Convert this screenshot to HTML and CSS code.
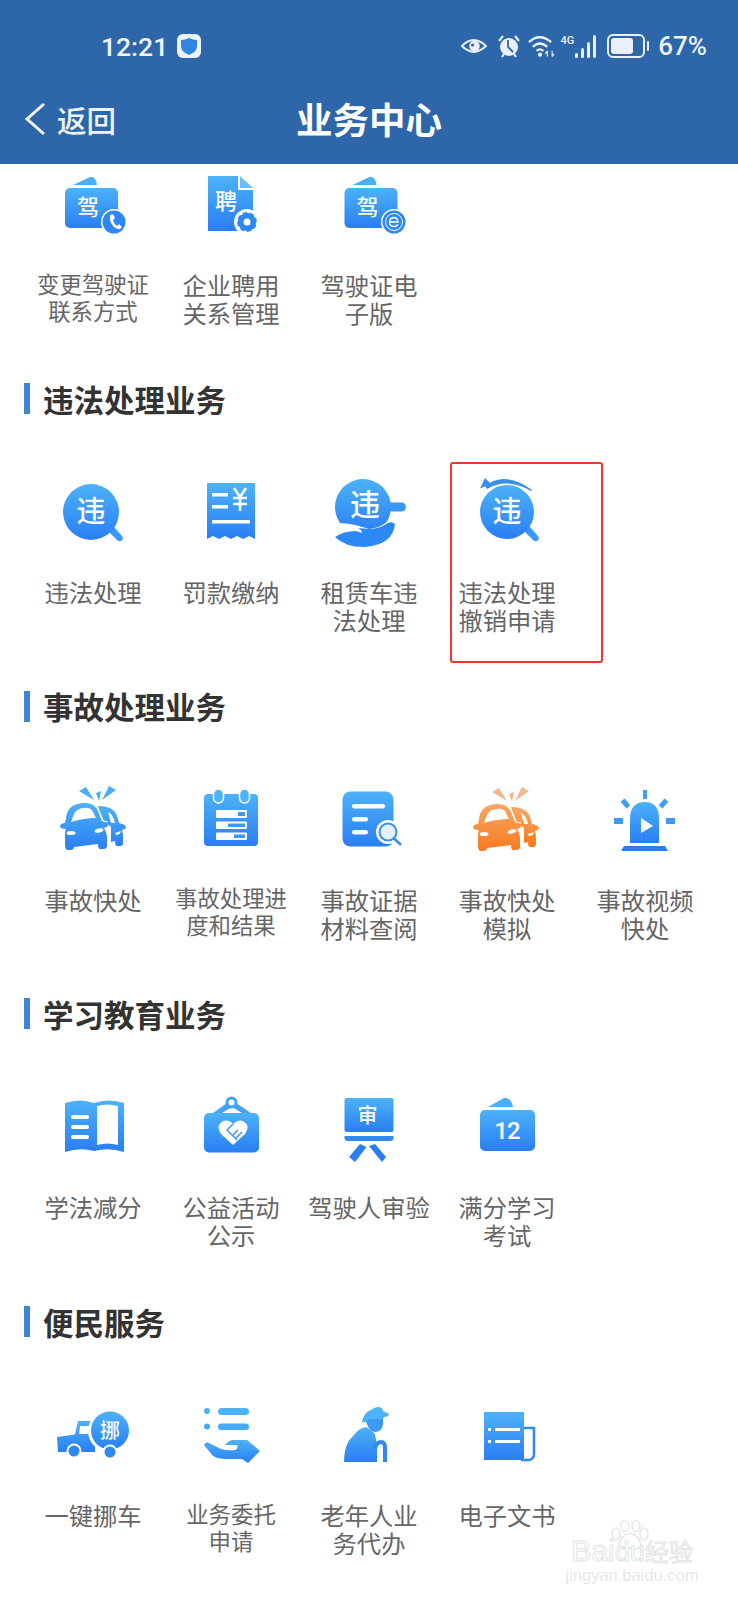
FILE: index.html
```html
<!DOCTYPE html>
<html lang="zh-CN">
<head>
<meta charset="UTF-8">
<meta name="viewport" content="width=device-width, initial-scale=1.0">
<title>业务中心</title>
<link rel="stylesheet" href="styles.css">
</head>
<body>
<svg class="defs" aria-hidden="true">
    <defs>
        <linearGradient id="blue" x1="0" y1="0" x2="0" y2="1">
            <stop offset="0" stop-color="#4cb2f9"/>
            <stop offset="1" stop-color="#2a7ef3"/>
        </linearGradient>
        <linearGradient id="orange" x1="0" y1="0" x2="0" y2="1">
            <stop offset="0" stop-color="#f9a765"/>
            <stop offset="1" stop-color="#f87a20"/>
        </linearGradient>
        <symbol id="card" viewBox="0 0 80 80">
            <path d="M20 19 L37 11 Q43 10 44 19 Z" fill="#4aaef8"/>
            <rect x="12" y="22" width="53" height="40" rx="5" fill="url(#blue)"/>
            <text x="35" y="49" class="glyph" font-size="22">驾</text>
        </symbol>
        <symbol id="car" viewBox="0 0 80 80">
            <path d="M45 25 Q55 25 60 29 Q64 32 66 42 Q72 43 73 46 Q73 48 69 49 Q70 52 70 56 V62 Q70 65 67 65 H64 Q62 65 62 60 L58 61 V46 L55 43 H52 L47 31 Z"/>
            <path d="M55 31 Q60 33 62 42 L58 42 Z" fill="#fff"/>
            <path d="M62 52 L68 50 Q67 54 63 54 Z" fill="#fff"/>
            <path d="M14 32 Q17 23 30 22 Q41 21 45 30 L49 40 Q54 39 56 42 Q56 46 51 47 Q54 51 54 56 V62 Q55 68 50 68 H47 Q45 68 45 63 L21 66 Q21 69 17 69 H15 Q12 69 12 64 V52 Q12 49 13 48 Q7 48 7 45 Q8 42 12 42 Z"/>
            <path d="M46 30 L50 40 L55 41 M52 47 Q55 51 55 56 V66" fill="none" stroke="#fff" stroke-width="1.200"/>
            <path d="M21 33 Q23 28 30 27 Q38 26 40 31 L43 37 Q31 37 18 41 Z" fill="#fff"/>
            <ellipse cx="18" cy="52" rx="4.500" ry="2" fill="#fff"/>
            <ellipse cx="46" cy="49.500" rx="4.500" ry="2" transform="rotate(-14 46 49.500)" fill="#fff"/>
        </symbol>
    </defs>
</svg>

<header class="top">
    <div class="status">
        <span class="time">12:21</span>
        <svg class="shield" viewBox="0 0 24 24">
            <rect x="0" y="0" width="24" height="24" rx="6" fill="#eef3f9"/>
            <path d="M12 4 Q16 6 20 6 V12 Q20 18 12 21 Q4 18 4 12 V6 Q8 6 12 4 Z" fill="#2f86e0"/>
        </svg>
        <div class="status-right">
            <svg width="26" height="18" viewBox="0 0 27 18">
                <path d="M1 9 Q13 -3 26 9 Q13 21 1 9 Z" fill="none" stroke="#eaf0f7" stroke-width="2.200"/>
                <circle cx="14" cy="9" r="5.500" fill="#eaf0f7"/>
                <circle cx="12" cy="8" r="1.600" fill="#2d66a9"/>
            </svg>
            <svg class="alarm" width="24" height="24" viewBox="0 0 24 24">
                <circle cx="12" cy="13" r="9" fill="#eaf0f7"/>
                <path d="M11 6 V13 L16 18" fill="none" stroke="#2d66a9" stroke-width="1.800"/>
                <path d="M2 7 L6 2 M22 7 L18 2 M5 23 L7 20 M19 23 L17 20" stroke="#eaf0f7" stroke-width="2.200"/>
            </svg>
            <svg class="wifi" width="28" height="24" viewBox="0 0 29 24">
                <path d="M1 8 Q12 -2 24 8 M5 13 Q12 6 20 13 M9 17 Q12 14 16 17" fill="none" stroke="#eaf0f7" stroke-width="2.400"/>
                <circle cx="12.500" cy="21" r="2.200" fill="#eaf0f7"/>
                <path d="M20 23 V17 M25 23 V17 M18 20 L20 17 M25 23 L27 20" stroke="#eaf0f7" stroke-width="1.200" fill="none"/>
            </svg>
            <div class="signal">
                <span class="net">4G</span>
                <svg width="24" height="23" viewBox="0 0 24 23">
                    <rect x="0" y="18" width="3" height="5" rx="1.500" fill="#eaf0f7"/>
                    <rect x="6" y="13" width="3" height="10" rx="1.500" fill="#eaf0f7"/>
                    <rect x="12" y="7" width="3" height="16" rx="1.500" fill="#eaf0f7"/>
                    <rect x="18" y="0" width="3" height="23" rx="1.500" fill="#eaf0f7"/>
                </svg>
            </div>
            <svg class="battery" width="42" height="24" viewBox="0 0 42 24">
                <rect x="1" y="1" width="36" height="22" rx="5" fill="none" stroke="#eaf0f7" stroke-width="2"/>
                <rect x="4" y="4" width="22" height="16" rx="3" fill="#eaf0f7"/>
                <rect x="40" y="7" width="2" height="10" rx="1" fill="#eaf0f7"/>
            </svg>
            <span class="percent">67%</span>
        </div>
    </div>
    <nav class="nav">
        <a class="back">
            <svg width="22" height="34" viewBox="0 0 22 34">
                <path d="M20 2 L3 17 L20 32" fill="none" stroke="#f2f6fb" stroke-width="3"/>
            </svg>
            返回
        </a>
        <h1>业务中心</h1>
    </nav>
</header>

<main class="content">
    <section class="section section-first">
        <div class="grid">
            <div class="item">
                <svg class="icon" viewBox="0 0 80 80">
                    <use href="#card" width="80" height="80"/>
                    <circle cx="61" cy="56" r="13" fill="#fff"/>
                    <circle cx="61" cy="56" r="11.500" fill="#2e88f3"/>
                    <path d="M57 49 L60 48 L62 52 L60 54 Q61 58 64 60 L66 58 L69 61 L67 63 Q63 64 60 60 Q56 55 57 49 Z" fill="#fff"/>
                </svg>
                <p class="label small">变更驾驶证<br>联系方式</p>
            </div>
            <div class="item">
                <svg class="icon" viewBox="0 0 80 80">
                    <path d="M17 10 H47 V24 H62 V65 H17 Z" fill="url(#blue)"/>
                    <path d="M49 10 L62 22 H49 Z" fill="#6cbdf9"/>
                    <text x="35" y="43" class="glyph" font-size="22">聘</text>
                    <circle cx="56" cy="56" r="13" fill="#fff"/>
                    <circle cx="56" cy="56" r="8" fill="#2e88f3" stroke="#2e88f3" stroke-width="4"/>
                    <circle cx="56" cy="56" r="10" fill="none" stroke="#fff" stroke-width="2" stroke-dasharray="3 4.850"/>
                    <circle cx="56" cy="56" r="3.500" fill="#fff"/>
                </svg>
                <p class="label">企业聘用<br>关系管理</p>
            </div>
            <div class="item">
                <svg class="icon" viewBox="0 0 80 80">
                    <use href="#card" x="3.500" width="80" height="80"/>
                    <circle cx="65" cy="56" r="13" fill="#fff"/>
                    <circle cx="65" cy="56" r="11.500" fill="#2e88f3"/>
                    <circle cx="65" cy="56" r="8.500" fill="none" stroke="#fff" stroke-width="1"/>
                    <path d="M60.500 56 H69 Q68.500 51.500 65 51.500 Q60.500 52 60.500 56 Q60.500 60.500 65 60.500 Q67.500 60.500 69 58.500" fill="none" stroke="#fff" stroke-width="1.400"/>
                </svg>
                <p class="label">驾驶证电<br>子版</p>
            </div>
        </div>
    </section>

    <section class="section">
        <h2>违法处理业务</h2>
        <div class="grid">
            <div class="item">
                <svg class="icon" viewBox="0 0 80 80">
                    <path d="M55 58 L60 53 L69 63 Q71 66 68 68 Q66 69 64 67 Z" fill="#3b97f5"/>
                    <circle cx="38" cy="39" r="28" fill="url(#blue)"/>
                    <text x="38" y="49" class="glyph" font-size="29">违</text>
                </svg>
                <p class="label">违法处理</p>
            </div>
            <div class="item">
                <svg class="icon" viewBox="0 0 80 80">
                    <path d="M16 11 Q16 10 17 10 H63 Q64 10 64 11 V66 L58 63 L52 66 L46 63 L40 66 L34 63 L28 66 L22 63 L16 66 Z" fill="url(#blue)"/>
                    <rect x="21" y="20" width="16" height="3.500" fill="#fff"/>
                    <rect x="21" y="32" width="16" height="3.500" fill="#fff"/>
                    <rect x="21" y="47" width="38" height="3.500" fill="#fff"/>
                    <path d="M43 15 L49 24 L55 15 M42 25 H56 M42 31 H56 M49 24 V38" fill="none" stroke="#fff" stroke-width="2.600"/>
                </svg>
                <p class="label">罚款缴纳</p>
            </div>
            <div class="item">
                <svg class="icon" viewBox="0 0 80 80">
                    <rect x="52" y="29.500" width="25" height="9" rx="4.500" fill="#3b97f5"/>
                    <circle cx="34" cy="34" r="28" fill="url(#blue)"/>
                    <path d="M8 50 Q20 50 30 53 L40 56 Q50 55 58 49 L70 44 V80 H0 V52 Z" fill="#fff"/>
                    <text x="36" y="42" class="glyph" font-size="30">违</text>
                    <path d="M6 64 Q14 58 27 58 L33 60 Q33 57 29 55 L40 56 Q50 56 59 50 Q63 48 66 51 Q64 72 35 74 Q16 74 6 64 Z" fill="#2e88f3"/>
                </svg>
                <p class="label">租赁车违<br>法处理</p>
            </div>
            <div class="item marked">
                <svg class="icon" viewBox="0 0 80 80">
                    <path d="M57 58 L62 53 L71 63 Q73 66 70 68 Q68 69 66 67 Z" fill="#3b97f5"/>
                    <circle cx="40" cy="39" r="27" fill="url(#blue)"/>
                    <text x="40" y="49" class="glyph" font-size="29">违</text>
                    <path d="M18 13 Q38 -3 65 17 L64 18 Q40 4 20 16 Z" fill="#3b8fe8"/>
                    <path d="M13 15.500 L18 5 L24 11 Z" fill="#3b8fe8"/>
                </svg>
                <p class="label">违法处理<br>撤销申请</p>
                <div class="mark"></div>
            </div>
        </div>
    </section>

    <section class="section">
        <h2>事故处理业务</h2>
        <div class="grid">
            <div class="item">
                <svg class="icon" viewBox="0 0 80 80">
                    <path d="M26 10 L33 6 L41 19 Z M43 12 L48 10 L46 20 Z M56 5 L63 9 L49 19 Z" fill="#4aaef8"/>
                    <use href="#car" fill="url(#blue)" width="80" height="80"/>
                </svg>
                <p class="label">事故快处</p>
            </div>
            <div class="item">
                <svg class="icon" viewBox="0 0 80 80">
                    <rect x="13" y="13" width="54" height="52" rx="4" fill="url(#blue)"/>
                    <rect x="22.500" y="8" width="10" height="14" rx="5" fill="#4cb2f9" stroke="#fff" stroke-width="1.500"/>
                    <rect x="48.500" y="8" width="10" height="14" rx="5" fill="#4cb2f9" stroke="#fff" stroke-width="1.500"/>
                    <rect x="25" y="29" width="31" height="8" rx="1" fill="#fff"/>
                    <rect x="25" y="40.500" width="31" height="7.500" rx="1" fill="#fff"/>
                    <rect x="25" y="51.500" width="31" height="7.500" rx="1" fill="#fff"/>
                    <rect x="47" y="31" width="7" height="4" fill="#3f97ee"/>
                    <rect x="37" y="42.500" width="17" height="3.500" fill="#3f97ee"/>
                    <rect x="43" y="53.500" width="11" height="3.500" fill="#3f97ee"/>
                </svg>
                <p class="label small">事故处理进<br>度和结果</p>
            </div>
            <div class="item">
                <svg class="icon" viewBox="0 0 80 80">
                    <rect x="13.500" y="10.500" width="51" height="55" rx="8" fill="url(#blue)"/>
                    <rect x="23" y="23" width="33" height="4.500" rx="2.200" fill="#fff"/>
                    <rect x="23" y="36" width="16" height="4.500" rx="2.200" fill="#fff"/>
                    <rect x="23" y="49" width="16" height="4.500" rx="2.200" fill="#fff"/>
                    <circle cx="59" cy="51" r="12" fill="#fff"/>
                    <circle cx="59" cy="51" r="8.500" fill="#e4f1fe" stroke="#3a90ee" stroke-width="2"/>
                    <path d="M64.500 57 L72 64" stroke="#3a90ee" stroke-width="2.600"/>
                </svg>
                <p class="label">事故证据<br>材料查阅</p>
            </div>
            <div class="item">
                <svg class="icon" viewBox="0 0 80 80">
                    <path d="M25 11 L32 7 L40 20 Z M42 13 L47 11 L45 21 Z M55 6 L62 10 L48 20 Z" fill="#f5b78e"/>
                    <use href="#car" fill="url(#orange)" x="-1" y="1" width="80" height="80"/>
                </svg>
                <p class="label">事故快处<br>模拟</p>
            </div>
            <div class="item">
                <svg class="icon" viewBox="0 0 80 80">
                    <rect x="38" y="9" width="4" height="9" fill="#3f9df5"/>
                    <rect x="18" y="18" width="5" height="9" transform="rotate(-40 20.500 22.500)" fill="#3f9df5"/>
                    <rect x="56" y="18" width="5" height="9" transform="rotate(40 58.500 22.500)" fill="#3f9df5"/>
                    <rect x="9" y="37" width="9" height="6" fill="#3f9df5"/>
                    <rect x="61" y="37" width="9" height="6" fill="#3f9df5"/>
                    <path d="M25 62 V38 Q25 21 40 21 Q54 21 54 38 V62 Z" fill="url(#blue)"/>
                    <path d="M36 37 L48 45 L36 52 Z" fill="#fff"/>
                    <path d="M19 65 H60 L63 70 H16 Z" fill="#2a7ef3"/>
                </svg>
                <p class="label">事故视频<br>快处</p>
            </div>
        </div>
    </section>

    <section class="section">
        <h2>学习教育业务</h2>
        <div class="grid">
            <div class="item">
                <svg class="icon" viewBox="0 0 80 80">
                    <path d="M12 15 Q27 10 41 15 Q56 10 71 15 V64 Q56 59 41 63 Q27 59 12 64 Z" fill="url(#blue)"/>
                    <path d="M44 18 Q54 15 65 18 V57 Q54 54 44 57 Z" fill="#fff"/>
                    <rect x="18" y="27" width="18" height="4" rx="2" fill="#fff"/>
                    <rect x="18" y="37" width="18" height="4" rx="2" fill="#fff"/>
                    <rect x="18" y="47" width="18" height="4" rx="2" fill="#fff"/>
                </svg>
                <p class="label">学法减分</p>
            </div>
            <div class="item">
                <svg class="icon" viewBox="0 0 80 80">
                    <path d="M22 25 L36 15 H45 L60 25 H51 L41 19 L31 25 Z" fill="#42a4f7"/>
                    <circle cx="40.500" cy="14.500" r="4.500" fill="#fff" stroke="#42a4f7" stroke-width="3"/>
                    <rect x="13" y="25" width="55" height="39.500" rx="5" fill="url(#blue)"/>
                    <path d="M42 57 L30 46 Q24 38 32 33 Q38 31 42 36 Q47 31 52 33 Q60 38 54 46 Z" fill="#fff"/>
                    <path d="M42 36 L36 42 L46 52 M47 42 L41 48 M51 44 L44 51" fill="none" stroke="#3f97ee" stroke-width="1.500"/>
                </svg>
                <p class="label">公益活动<br>公示</p>
            </div>
            <div class="item">
                <svg class="icon" viewBox="0 0 80 80">
                    <rect x="15.500" y="10" width="49" height="34" rx="2" fill="url(#blue)"/>
                    <path d="M15.500 48 H64.500 V50 Q64.500 53 61 53 H19 Q15.500 53 15.500 50 Z" fill="#3388ee"/>
                    <path d="M31 56 L37.500 59 L26 74 L20 69 Z M46 56 L57 69 L53 74 L40 58 Z" fill="#2a7ef3"/>
                    <text x="38.500" y="35" class="glyph" font-size="20">审</text>
                </svg>
                <p class="label">驾驶人审验</p>
            </div>
            <div class="item">
                <svg class="icon" viewBox="0 0 80 80">
                    <path d="M21 19 L37 10 Q44 9 46 19 Z" fill="#4aaef8"/>
                    <rect x="13" y="22" width="55" height="41" rx="5" fill="url(#blue)"/>
                    <text x="40" y="51" class="digits" font-size="24">12</text>
                </svg>
                <p class="label">满分学习<br>考试</p>
            </div>
        </div>
    </section>

    <section class="section">
        <h2>便民服务</h2>
        <div class="grid">
            <div class="item">
                <svg class="icon" viewBox="0 0 80 80">
                    <path d="M4 41 L22 38.500 L25 25 H42 V56 H5 Z" fill="url(#blue)"/>
                    <path d="M27 30 H38 L35 38 H26 Z" fill="#fff"/>
                    <circle cx="21" cy="55" r="7.500" fill="#fff"/>
                    <circle cx="21" cy="55" r="5.500" fill="#2e88f3"/>
                    <circle cx="56" cy="35" r="21" fill="#fff"/>
                    <circle cx="57" cy="34.500" r="19" fill="url(#blue)"/>
                    <text x="57" y="42" class="glyph" font-size="20">挪</text>
                    <circle cx="57" cy="56" r="7.500" fill="#fff"/>
                    <circle cx="57" cy="56" r="5.500" fill="#2e88f3"/>
                </svg>
                <p class="label">一键挪车</p>
            </div>
            <div class="item">
                <svg class="icon" viewBox="0 0 80 80">
                    <circle cx="16" cy="15" r="3" fill="#4cb2f9"/>
                    <circle cx="16" cy="30.500" r="3" fill="#47aaf8"/>
                    <rect x="27" y="12" width="31" height="7" rx="3.500" fill="#4cb2f9"/>
                    <rect x="27" y="27.500" width="31" height="6.500" rx="3.200" fill="#47aaf8"/>
                    <path d="M13 49 Q15 45 18 47 L30 53 Q36 55 44 54 Q48 52 46 49 L34 49 Q38 44 42 44 H56 L69 55 L57 67 L51 63 H33 Q27 63 22 60 Z" fill="url(#blue)"/>
                </svg>
                <p class="label small">业务委托<br>申请</p>
            </div>
            <div class="item">
                <svg class="icon" viewBox="0 0 80 80">
                    <path d="M36 24 Q44 20 54 21 V28 Q53 36 46 36 Q40 35 38 28 Z" fill="#3a9af6"/>
                    <path d="M33 26 Q35 16 42 14 Q48 9 53 12 L54 15 L60 18 Q60 21 55 21 L54 23 H40 Q38 27 33 26 Z" fill="#4cb2f9"/>
                    <path d="M15 66 Q15 48 24 40 Q30 32 37 31 Q43 34 46 38 L48 50 V66 Z" fill="url(#blue)"/>
                    <path d="M46 52 Q48 46 52 46 Q56 46 56 52 V66" fill="none" stroke="#2e88f3" stroke-width="4"/>
                </svg>
                <p class="label">老年人业<br>务代办</p>
            </div>
            <div class="item">
                <svg class="icon" viewBox="0 0 80 80">
                    <path d="M17 16 H57 V64 H17 Z" fill="url(#blue)"/>
                    <path d="M57 32 H67 V58 Q67 63 62 64 H54" fill="none" stroke="#3388ee" stroke-width="2.500"/>
                    <path d="M59 33 H63 V58 Q61 62 59 60 Z" fill="#fff"/>
                    <rect x="21" y="32" width="3" height="3" fill="#fff"/>
                    <rect x="21" y="44" width="3" height="3" fill="#fff"/>
                    <rect x="28" y="32" width="25" height="3" fill="#fff"/>
                    <rect x="28" y="44" width="25" height="3" fill="#fff"/>
                </svg>
                <p class="label">电子文书</p>
            </div>
        </div>
    </section>
</main>

<div class="watermark">
    <svg class="paw" width="42" height="36" viewBox="0 0 42 32">
        <g fill="#fff" stroke="#e6e6e6" stroke-width="1.500">
            <ellipse cx="7" cy="14" rx="4" ry="6"/>
            <ellipse cx="16" cy="6" rx="4" ry="5.500"/>
            <ellipse cx="27" cy="6" rx="4" ry="5.500"/>
            <ellipse cx="35" cy="14" rx="4" ry="6"/>
            <path d="M21 13 Q31 16 32 25 Q30 31 21 28 Q12 31 10 25 Q11 16 21 13 Z"/>
        </g>
    </svg>
    <div class="wm-name">Bai<span class="wm-du">du</span><span class="wm-cn">经验</span></div>
    <div class="wm-url">jingyan.baidu.com</div>
</div>
</body>
</html>
```

FILE: styles.css
```css
html, body {
    margin: 0;
    padding: 0;
}
body {
    position: relative;
    width: 738px;
    height: 1600px;
    overflow: hidden;
    background-color: #fff;
    font-family: "Noto Sans CJK SC", "Noto Sans", sans-serif;
}
.defs {
    position: absolute;
    width: 0;
    height: 0;
}
.top {
    height: 164px;
    background-color: #2d66a9;
    color: #eef3f9;
}
.status {
    display: flex;
    align-items: center;
    height: 92px;
    padding: 0 31px 0 101px;
    font-family: Roboto, sans-serif;
    font-weight: 500;
}
.time {
    font-size: 26.5px;
}
.shield {
    width: 24px;
    height: 24px;
    margin-left: 9px;
}
.status-right {
    display: flex;
    align-items: center;
    margin-left: auto;
}
.alarm {
    margin-left: 10px;
}
.wifi {
    margin-left: 7px;
}
.signal {
    display: flex;
    align-items: flex-start;
    margin-left: 5px;
}
.net {
    font-size: 11px;
    line-height: 12px;
    margin-right: 1px;
}
.battery {
    margin-left: 8px;
}
.percent {
    margin-left: 9px;
    font-size: 26px;
}
.nav {
    display: grid;
    grid-template-columns: 1fr auto 1fr;
    align-items: center;
    height: 52px;
}
.back {
    display: flex;
    align-items: center;
    gap: 11px;
    padding-left: 24px;
    font-size: 29.5px;
    font-weight: 500;
}
.nav h1 {
    margin: 0;
    font-size: 36.5px;
    font-weight: 700;
    color: #fff;
}
.content {
    padding-top: 2px;
}
.section {
    padding-bottom: 54.7px;
}
.section-first {
    padding-bottom: 54px;
}
.section h2 {
    display: flex;
    align-items: center;
    height: 31px;
    margin: 0 0 59px 24px;
    padding-left: 13px;
    border-left: 6.5px solid #3a86d2;
    font-size: 30.5px;
    font-weight: 700;
    color: #333;
}
.grid {
    display: grid;
    grid-template-columns: repeat(5, 138px);
    padding-left: 24px;
}
.item {
    position: relative;
    display: flex;
    flex-direction: column;
    align-items: center;
}
.icon {
    display: block;
    width: 80px;
    height: 80px;
}
.label {
    min-height: 58px;
    margin: 25px 0 0;
    font-size: 24.3px;
    line-height: 28px;
    color: #666;
    text-align: center;
    white-space: nowrap;
}
.label.small {
    min-height: 56px;
    margin-top: 23.5px;
    font-size: 22.4px;
    line-height: 27px;
}
.glyph {
    fill: #fff;
    text-anchor: middle;
    font-family: "Noto Sans CJK SC", sans-serif;
    font-weight: 500;
}
.digits {
    fill: #fff;
    text-anchor: middle;
    font-family: Roboto, sans-serif;
    font-weight: 500;
    letter-spacing: -1px;
}
.mark {
    position: absolute;
    left: 12px;
    top: -11px;
    box-sizing: border-box;
    width: 153px;
    height: 201px;
    border: 2px solid #ea3a30;
    border-radius: 3px;
}
.watermark {
    position: absolute;
    left: 565px;
    top: 1518px;
    width: 134px;
    text-align: center;
}
.paw {
    position: absolute;
    left: 44px;
    top: 0;
}
.wm-name {
    position: relative;
    margin-top: 20px;
    font-family: "Liberation Sans", "Noto Sans CJK SC", sans-serif;
    font-size: 30px;
    line-height: 26px;
    white-space: nowrap;
    color: #fff;
    -webkit-text-stroke: 1px #e4e4e4;
}
.wm-du {
    font-size: 27px;
}
.wm-cn {
    font-size: 24px;
}
.wm-url {
    margin-top: 2px;
    font-family: "Liberation Sans", sans-serif;
    font-size: 16.5px;
    line-height: 14px;
    color: #e8e8e8;
    white-space: nowrap;
}
```
